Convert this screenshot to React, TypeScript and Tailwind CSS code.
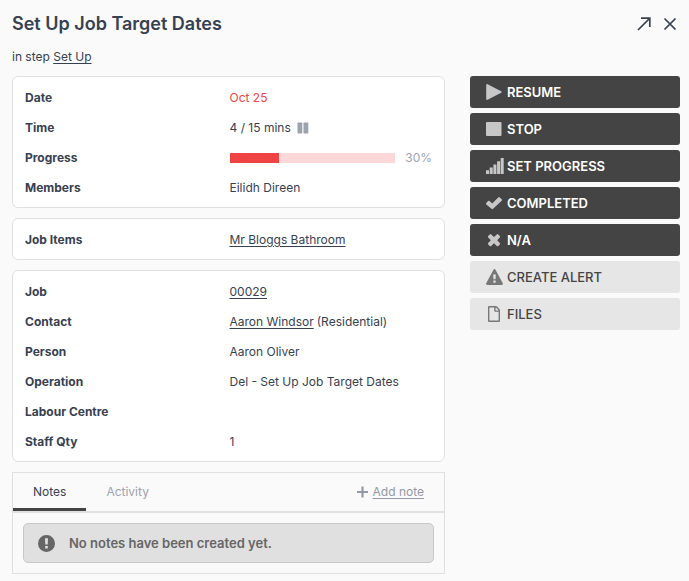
import type { ReactNode } from 'react';

const icons = {
    resume: <path d="M.2 1C.2.2.9-.2 1.600.200L15.200 7.300c.7.400.7 1 0 1.400L1.600 15.800c-.7.400-1.400 0-1.400-.8z" />,
    stop: <rect x="0" y="1" width="15.500" height="14" rx="1" />,
    progress: <path d="M0 12.200h3V16H0zM3.700 9.500h3V16h-3zM7.400 6.500h3V16h-3zM11.100 3.200h3V16h-3zM14.700 0h3v16h-3z" />,
    completed: <path d="M.3 8.100 2 6.100a1.100 1.100 0 0 1 1.600 0L6.200 8.600 12.200 2.400a1.100 1.100 0 0 1 1.600 0l1.900 1.800a1.100 1.100 0 0 1 0 1.500L7.100 13.800a1.100 1.100 0 0 1-1.600 0L.3 9.600a1.100 1.100 0 0 1 0-1.500z" />,
    na: <path d="M2.200 3.900 3.700 2.400a1.100 1.100 0 0 1 1.500 0L8 5l2.800-2.600a1.100 1.100 0 0 1 1.500 0l1.500 1.500a1.100 1.100 0 0 1 0 1.500L11.200 8.200l2.600 2.700a1.100 1.100 0 0 1 0 1.500L12.300 13.900a1.100 1.100 0 0 1-1.500 0L8 11.300l-2.800 2.600a1.100 1.100 0 0 1-1.500 0l-1.500-1.500a1.100 1.100 0 0 1 0-1.500L4.800 8.200 2.200 5.400a1.100 1.100 0 0 1 0-1.500z" />,
    alert: <path fillRule="evenodd" d="M7.500.7a1.100 1.100 0 0 1 2 0l7.300 13.600c.4.800-.1 1.700-1 1.700H1.200c-.9 0-1.400-.9-1-1.700zM7.200 5.500l.3 4.700h2l.3-4.700zM7.400 11.500v2.200h2.200v-2.200z" />,
    files: <path fillRule="evenodd" d="M3 0h6.700c.5 0 1 .2 1.400.6l2.300 2.300c.4.400.6.900.6 1.400V15a1 1 0 0 1-1 1H3a1 1 0 0 1-1-1V1a1 1 0 0 1 1-1zM3.400 1.400v13.200h9.200V5.800H9.200a1 1 0 0 1-1-1V1.400zM9.600 1.500v2.900h2.900c-.1-.3-.2-.5-.3-.6l-2-2a1 1 0 0 0-.6-.3z" />,
};

const actions: { label: string; icon: keyof typeof icons; light?: boolean }[] = [
    { label: 'RESUME', icon: 'resume' },
    { label: 'STOP', icon: 'stop' },
    { label: 'SET PROGRESS', icon: 'progress' },
    { label: 'COMPLETED', icon: 'completed' },
    { label: 'N/A', icon: 'na' },
    { label: 'CREATE ALERT', icon: 'alert', light: true },
    { label: 'FILES', icon: 'files', light: true },
];

const Card = ({ children }: { children: ReactNode }) => (
    <dl className="rounded-md border border-[#dfe0e1] bg-white px-3 pt-[6px] pb-1">{children}</dl>
);

const Row = ({ label, children }: { label: string; children?: ReactNode }) => (
    <div className="flex h-[30px] items-center">
        <dt className="w-1/2 shrink-0 font-bold">{label}</dt>
        <dd className="flex min-w-0 flex-1 items-center pl-px">{children}</dd>
    </div>
);

const App = () => {
    const progress = 30;

    return (
        <div className="min-h-screen bg-[#fafafa] pt-3 pr-[9px] pb-2 pl-3 font-['Inter',sans-serif] text-xs leading-5 text-[#374151]">
            <header className="flex h-6 items-center justify-between">
                <h1 className="text-lg leading-6 font-semibold">Set Up Job Target Dates</h1>
                <div className="flex items-center gap-3 pr-[3px]">
                    <button type="button" aria-label="Open in full page">
                        <svg className="size-[14px]" viewBox="0 0 14 14" fill="none" stroke="currentColor" strokeWidth="1.700">
                            <path d="M1 13 12.500 1.500M4 1.200h8.800V10" />
                        </svg>
                    </button>
                    <button type="button" aria-label="Close">
                        <svg className="size-[14px]" viewBox="0 0 14 14" fill="none" stroke="currentColor" strokeWidth="1.700">
                            <path d="M1.500 1.500l11 11M12.500 1.500l-11 11" />
                        </svg>
                    </button>
                </div>
            </header>

            <p className="mt-[11px]">
                in step <a href="#" className="underline underline-offset-2">Set Up</a>
            </p>

            <div className="mt-[9px] flex items-start gap-[25px]">
                <main className="flex min-w-0 flex-1 flex-col gap-[10px]">
                    <Card>
                        <Row label="Date">
                            <span className="text-[#ef4444]">Oct 25</span>
                        </Row>
                        <Row label="Time">
                            4 / 15 mins
                            <svg className="ml-[6px] h-3 w-3 text-[#9ca3af]" viewBox="0 0 12 12" fill="currentColor">
                                <rect x="0.500" y="0.500" width="4.800" height="11" rx="0.700" />
                                <rect x="6.500" y="0.500" width="4.800" height="11" rx="0.700" />
                            </svg>
                        </Row>
                        <Row label="Progress">
                            <span className="h-[10px] flex-1 bg-[#fdd8d8]">
                                <span className="block h-full bg-[#f04444]" style={{ width: `${progress}%` }} />
                            </span>
                            <span className="w-[37px] text-right text-[#9ca3af]">{progress}%</span>
                        </Row>
                        <Row label="Members">Eilidh Direen</Row>
                    </Card>

                    <Card>
                        <Row label="Job Items">
                            <a href="#" className="underline underline-offset-2">Mr Bloggs Bathroom</a>
                        </Row>
                    </Card>

                    <Card>
                        <Row label="Job">
                            <a href="#" className="underline underline-offset-2">00029</a>
                        </Row>
                        <Row label="Contact">
                            <a href="#" className="mr-[3px] underline underline-offset-2">Aaron Windsor</a> (Residential)
                        </Row>
                        <Row label="Person">Aaron Oliver</Row>
                        <Row label="Operation">Del - Set Up Job Target Dates</Row>
                        <Row label="Labour Centre" />
                        <Row label="Staff Qty">1</Row>
                    </Card>

                    <section className="border border-[#dfe0e1]">
                        <div className="flex h-10 items-stretch border-b-2 border-[#e0e0e0]">
                            <button type="button" className="border-b-3 border-[#444] px-5 pt-[3px]">Notes</button>
                            <button type="button" className="border-b-3 border-transparent px-5 pt-[3px] text-[#9ca3af]">Activity</button>
                            <a href="#" className="ml-auto flex items-center gap-1 pr-5 text-[#9399a5]">
                                <svg className="h-3 w-3" viewBox="0 0 12 12" fill="none" stroke="currentColor" strokeWidth="2.200">
                                    <path d="M5.500 .5v11M0 6h11" />
                                </svg>
                                <span className="underline underline-offset-2">Add note</span>
                            </a>
                        </div>
                        <div className="p-[10px]">
                            <div className="flex h-10 items-center rounded-[5px] border border-[#c8c8c8] bg-[#e0e0e0] px-[14px] text-[13px] font-semibold text-[#666]">
                                <svg className="mr-[14px] size-[17px]" viewBox="0 0 17 17" fill="currentColor">
                                    <path fillRule="evenodd" d="M8.500 0a8.500 8.500 0 1 1 0 17 8.500 8.500 0 0 1 0-17zM7 3.300l.3 6.300h2.400L10 3.300zM7.200 11v2.600h2.600V11z" />
                                </svg>
                                No notes have been created yet.
                            </div>
                        </div>
                    </section>
                </main>

                <aside className="flex w-[210px] shrink-0 flex-col gap-[5px]">
                    {actions.map(({ label, icon, light }) => (
                        <button
                            key={label}
                            type="button"
                            className={`flex h-8 items-center gap-[3px] rounded-[3px] px-4 text-[13px] ${light ? 'bg-[#e6e6e6] font-medium text-[#444]' : 'bg-[#444] font-semibold text-white'}`}
                        >
                            <svg
                                className={`h-4 w-[18px] ${light ? 'text-[#777]' : 'text-[#c7c7c7]'}`}
                                viewBox="0 0 18 16"
                                fill="currentColor"
                            >
                                {icons[icon]}
                            </svg>
                            {label}
                        </button>
                    ))}
                </aside>
            </div>
        </div>
    );
};

export default App;
